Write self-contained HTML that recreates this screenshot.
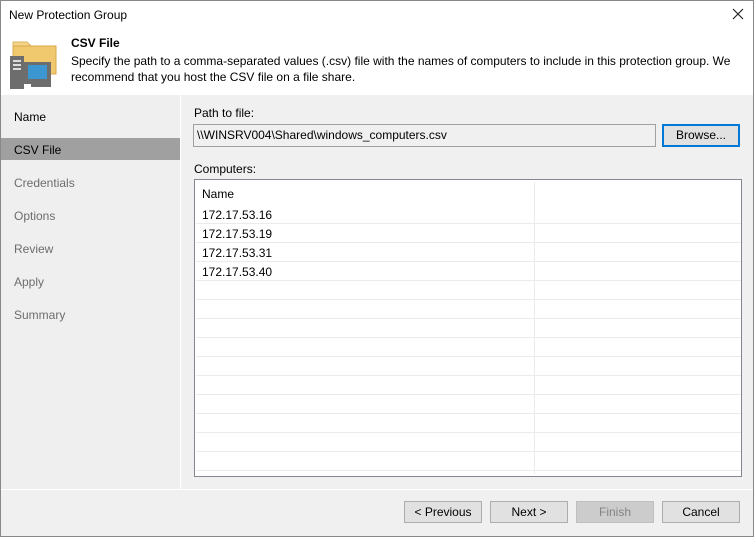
<!DOCTYPE html>
<html><head><style>
*{box-sizing:border-box;margin:0;padding:0}
body{width:754px;height:537px;overflow:hidden;background:#f0f0f0;font-family:"Liberation Sans","DejaVu Sans",sans-serif;font-size:12px;color:#000;position:relative}
.abs{position:absolute}
.win{left:0;top:0;width:754px;height:537px;border:1px solid #888;}
.btn{position:absolute;top:501px;width:78px;height:22px;background:#e1e1e1;border:1px solid #adadad;text-align:center;line-height:20px;font-size:12px}
.nav{position:absolute;left:14px;font-size:12px;color:#6d6d6d}
.row{position:absolute;left:1px;width:546px;height:1px;background:#ebebeb}
</style></head><body>
<div class="abs" style="left:0;top:0;width:754px;height:95px;background:#fff"></div>
<div class="abs" style="left:9px;top:8px;font-size:12px">New Protection Group</div>
<svg class="abs" style="left:732px;top:8px" width="12" height="12"><path d="M1 1L11 11M11 1L1 11" stroke="#222" stroke-width="1.2"/></svg>
<svg class="abs" style="left:9px;top:38px" width="50" height="52">
<path d="M4 4h14l4 4h-18z" fill="#f4d48a" stroke="#d9b55c"/>
<rect x="4" y="8" width="43" height="28" fill="#f0c86e" stroke="#d9a84a"/>
<rect x="1" y="18" width="14" height="33" fill="#6d6d6d"/>
<rect x="4" y="22" width="8" height="2" fill="#ddd"/><rect x="4" y="26" width="8" height="2" fill="#ddd"/><rect x="4" y="30" width="8" height="2" fill="#ddd"/>
<rect x="15" y="24" width="27" height="22" fill="#6d6d6d"/>
<rect x="19" y="27" width="19" height="14" fill="#3c96d0"/>
<rect x="22" y="46" width="20" height="3" fill="#6d6d6d"/>
</svg>
<div class="abs" style="left:71px;top:36px;font-weight:bold;font-size:12px">CSV File</div>
<div class="abs" style="left:71px;top:53px;width:680px;line-height:16px">Specify the path to a comma-separated values (.csv) file with the names of computers to include in this protection group. We recommend that you host the CSV file on a file share.</div>
<div class="abs" style="left:0;top:95px;width:180px;height:394px;background:#efefef"></div>
<div class="abs" style="left:180px;top:95px;width:1px;height:394px;background:#fff"></div>
<div class="nav" style="left:14px;top:110px;color:#000">Name</div>
<div class="abs" style="left:0;top:138px;width:180px;height:22px;background:#a0a0a0"></div>
<div class="nav" style="top:143px;color:#000">CSV File</div>
<div class="nav" style="top:176px">Credentials</div>
<div class="nav" style="top:209px">Options</div>
<div class="nav" style="top:242px">Review</div>
<div class="nav" style="top:275px">Apply</div>
<div class="nav" style="top:308px">Summary</div>
<div class="abs" style="left:194px;top:106px">Path to file:</div>
<div class="abs" style="left:193px;top:124px;width:463px;height:23px;border:1px solid #a0a0a0;background:#f0f0f0;padding:3px 3px;">\\WINSRV004\Shared\windows_computers.csv</div>
<div class="abs" style="left:662px;top:124px;width:78px;height:23px;border:2px solid #0078d7;background:#e1e1e1;text-align:center;line-height:19px">Browse...</div>
<div class="abs" style="left:194px;top:162px">Computers:</div>
<div class="abs" style="left:194px;top:179px;width:548px;height:298px;border:1px solid #828790;background:#fff;overflow:hidden">
<div class="abs" style="left:339px;top:2px;width:1px;height:292px;background:#e8ebef"></div>
<div class="abs" style="left:7px;top:7px">Name</div>
<div class="abs" style="left:7px;top:28px">172.17.53.16</div>
<div class="abs" style="left:7px;top:47px">172.17.53.19</div>
<div class="abs" style="left:7px;top:66px">172.17.53.31</div>
<div class="abs" style="left:7px;top:85px">172.17.53.40</div>
<div class="row" style="top:43px"></div><div class="row" style="top:62px"></div><div class="row" style="top:81px"></div><div class="row" style="top:100px"></div><div class="row" style="top:119px"></div><div class="row" style="top:138px"></div><div class="row" style="top:157px"></div><div class="row" style="top:176px"></div><div class="row" style="top:195px"></div><div class="row" style="top:214px"></div><div class="row" style="top:233px"></div><div class="row" style="top:252px"></div><div class="row" style="top:271px"></div><div class="row" style="top:290px"></div>
</div>
<div class="abs" style="left:0;top:489px;width:754px;height:1px;background:#fff"></div>
<div class="btn" style="left:404px">&lt; Previous</div>
<div class="btn" style="left:490px">Next &gt;</div>
<div class="btn" style="left:576px;background:#cccccc;border-color:#bfbfbf;color:#838383">Finish</div>
<div class="btn" style="left:662px">Cancel</div>
<div class="abs win"></div>
</body></html>
